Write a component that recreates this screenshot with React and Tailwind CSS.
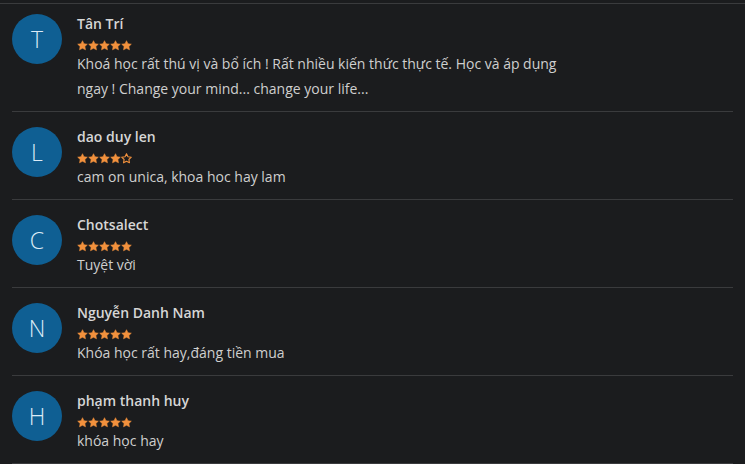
import React from 'react';

const reviews = [
  {
    letter: 'T',
    name: 'Tân Trí',
    rating: 5,
    text: 'Khoá học rất thú vị và bổ ích ! Rất nhiều kiến thức thực tế. Học và áp dụng ngay ! Change your mind... change your life...',
  },
  { letter: 'L', name: 'dao duy len', rating: 4, text: 'cam on unica, khoa hoc hay lam' },
  { letter: 'C', name: 'Chotsalect', rating: 5, text: 'Tuyệt vời' },
  { letter: 'N', name: 'Nguyễn Danh Nam', rating: 5, text: 'Khóa học rất hay,đáng tiền mua' },
  { letter: 'H', name: 'phạm thanh huy', rating: 5, text: 'khóa học hay' },
];

const Star = ({ filled }) => (
  <svg width="11" height="11" viewBox="0 0 24 24" className="shrink-0">
    <path
      d="M12 1.5l3.2 6.6 7.3 1-5.3 5.1 1.3 7.2L12 18l-6.5 3.4 1.3-7.2-5.3-5.1 7.3-1z"
      fill={filled ? '#f2913d' : 'none'}
      stroke="#f2913d"
      strokeWidth={filled ? 1.2 : 2.4}
      strokeLinejoin="round"
    />
  </svg>
);

const Review = ({ review, first }) => (
  <div className={`flex items-start mx-3 border-b border-[#3a3b3d] pb-[10px] ${first ? 'pt-[10px]' : 'pt-[15px]'}`}>
    <div className="w-[50px] h-[50px] rounded-full bg-[#0f5f93] flex items-center justify-center shrink-0">
      <span className="text-[#dcebf6] text-[23px] font-light leading-none">{review.letter}</span>
    </div>
    <div className="ml-[15px]">
      <div className="text-[14px] leading-[20px] font-semibold text-[#d6d6d6]">{review.name}</div>
      <div className="flex mt-[6px] h-[11px]">
        {[1, 2, 3, 4, 5].map((i) => (
          <Star key={i} filled={i <= review.rating} />
        ))}
      </div>
      <p className="text-[14px] leading-[25px] text-[#cfcfcf] max-w-[500px]">{review.text}</p>
    </div>
  </div>
);

export default function App() {
  return (
    <div className="w-[745px] h-[464px] bg-[#1b1c1e] pt-[3px] overflow-hidden font-['Open_Sans',sans-serif]">
      <div className="border-t border-[#3a3b3d]">
        {reviews.map((r, i) => (
          <Review key={r.name} review={r} first={i === 0} />
        ))}
      </div>
    </div>
  );
}
